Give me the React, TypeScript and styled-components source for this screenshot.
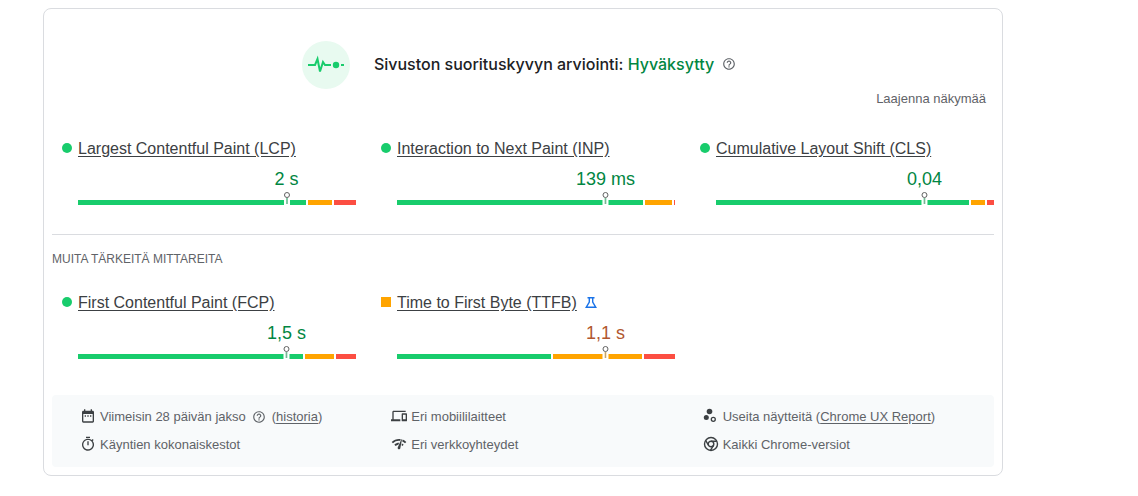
import React from "react";
import styled, { createGlobalStyle } from "styled-components";
import { MdDateRange, MdDevices, MdHelpOutline, MdNetworkCheck, MdOutlineTimer } from "react-icons/md";

type Rating = "good" | "average" | "poor";

const barColors: Record<Rating, string> = { good: "#18cc6c", average: "#ffa400", poor: "#fc4e42" };
const valueColors: Record<Rating, string> = { good: "#018642", average: "#b1572f", poor: "#eb0f00" };

interface MetricData {
  name: string;
  value: string;
  rating: Rating;
  shares: [number, number, number];
  experimental?: boolean;
}

const coreMetrics: MetricData[] = [
  { name: "Largest Contentful Paint (LCP)", value: "2 s", rating: "good", shares: [227, 24, 22] },
  { name: "Interaction to Next Paint (INP)", value: "139 ms", rating: "good", shares: [245, 27, 1] },
  { name: "Cumulative Layout Shift (CLS)", value: "0,04", rating: "good", shares: [253, 14, 7] },
];

const otherMetrics: MetricData[] = [
  { name: "First Contentful Paint (FCP)", value: "1,5 s", rating: "good", shares: [224, 29, 20] },
  { name: "Time to First Byte (TTFB)", value: "1,1 s", rating: "average", shares: [153, 89, 31], experimental: true },
];

const GlobalStyle = createGlobalStyle`
  *, *::before, *::after { box-sizing: border-box; }
  body {
    margin: 0;
    background: #fff;
    color: #5f6368;
    font-family: "Liberation Sans", Arial, sans-serif;
  }
`;

const Page = styled.main`
  padding: 8px 43px 20px;
`;

const Card = styled.section`
  max-width: 960px;
  padding: 32px 8px 8px;
  border: 1px solid #dadce0;
  border-radius: 8px;
`;

const Header = styled.header`
  display: flex;
  align-items: center;
  justify-content: center;
  gap: 24px;
`;

const Badge = styled.span`
  display: flex;
  flex: none;
  width: 48px;
  height: 48px;
  border-radius: 50%;
  background: #e8faf0;
`;

const Title = styled.h1`
  display: flex;
  align-items: center;
  margin: 0;
  padding-bottom: 2px;
  color: #202124;
  font: 500 16px/24px "Google Sans", Inter, sans-serif;
`;

const Verdict = styled.span`
  color: #018642;
`;

const HelpButton = styled.button<{ $space: number }>`
  display: inline-flex;
  flex: none;
  margin: 0 ${(p) => p.$space}px;
  padding: 0;
  border: 0;
  background: none;
  color: #5f6368;
  font-size: 14px;
  cursor: pointer;
`;

const Toolbar = styled.div`
  display: flex;
  justify-content: flex-end;
  padding-right: 8px;
`;

const ExpandButton = styled.button`
  padding: 0;
  border: 0;
  background: none;
  color: #5f6368;
  font: 13px/20px "Liberation Sans", Arial, sans-serif;
  cursor: pointer;
`;

const MetricGrid = styled.div<{ $top: number }>`
  display: grid;
  grid-template-columns: repeat(3, minmax(0, 1fr));
  column-gap: 25px;
  margin-top: ${(p) => p.$top}px;
  padding-left: 10px;
`;

const MetricBox = styled.article`
  display: grid;
  grid-template-columns: 10px minmax(0, 1fr);
  column-gap: 6px;
  align-items: center;
`;

const Marker = styled.span<{ $rating: Rating }>`
  width: 10px;
  height: 10px;
  border-radius: ${(p) => (p.$rating === "good" ? "50%" : "0")};
  background: ${(p) => barColors[p.$rating]};
`;

const MetricName = styled.h2`
  display: flex;
  align-items: center;
  gap: 8px;
  margin: 0;
  padding-top: 2px;
  font-size: 16px;
  font-weight: 400;
  line-height: 24px;
`;

const TextLink = styled.a`
  color: inherit;
  text-decoration: underline;
  text-underline-offset: 2px;
`;

const MetricLink = styled(TextLink)`
  color: #3c4043;
`;

const Chart = styled.div`
  position: relative;
  grid-column: 2;
  padding-top: 39px;
`;

const Pin = styled.div<{ $rating: Rating }>`
  position: absolute;
  top: 6px;
  left: 75%;
  display: flex;
  flex-direction: column;
  align-items: center;
  transform: translateX(-50%);
  color: ${(p) => valueColors[p.$rating]};
  font-size: 18px;
  line-height: 24px;
  white-space: nowrap;
`;

const Bar = styled.div`
  display: flex;
  gap: 2px;
  height: 5px;
`;

const Segment = styled.span<{ $rating: Rating }>`
  flex-basis: 0;
  background: ${(p) => barColors[p.$rating]};
`;

const Divider = styled.hr`
  height: 1px;
  margin: 29px 0 16px;
  border: 0;
  background: #dadce0;
`;

const SectionLabel = styled.h2`
  margin: 0;
  font-size: 12px;
  font-weight: 400;
  line-height: 16px;
  text-transform: uppercase;
`;

const Facts = styled.ul`
  display: grid;
  grid-template-columns: repeat(3, minmax(0, 1fr));
  gap: 10px 28px;
  margin: 36px 0 0;
  padding: 13px 8px 13px 28px;
  border-radius: 4px;
  background: #f8fafb;
  list-style: none;
`;

const Fact = styled.li`
  display: flex;
  align-items: center;
  gap: 4px;
  font-size: 13px;
  line-height: 18px;
  white-space: nowrap;

  & > svg {
    flex: none;
    width: 16px;
    height: 16px;
    margin-bottom: 2px;
    color: #3c4043;
  }
`;

function PulseIcon() {
  return (
    <svg width="48" height="48" viewBox="0 0 48 48" fill="none" aria-hidden="true">
      <path d="M6 24h7l2.500-6L18 30.500l3-9.500 2 3h6" stroke="#18cc6c" strokeWidth="2" />
      <circle cx="34" cy="24" r="3.200" fill="#18cc6c" />
      <path d="M39 24h3" stroke="#18cc6c" strokeWidth="2" />
    </svg>
  );
}

function FlaskIcon() {
  return (
    <svg width="12" height="14" viewBox="0 0 12 14" fill="none" stroke="#1a73e8" strokeWidth="1.400" role="img" aria-label="Kokeellinen">
      <path d="M2.500 1.700h7M4.300 1.700v4.300L1.200 11.300h9.600L7.700 6V1.700" />
    </svg>
  );
}

function SamplesIcon() {
  return (
    <svg viewBox="0 0 16 16" aria-hidden="true">
      <circle cx="6.500" cy="3.500" r="2.800" fill="currentColor" />
      <circle cx="3.300" cy="9.500" r="2.500" fill="currentColor" />
      <circle cx="10.300" cy="11.300" r="2" fill="none" stroke="currentColor" strokeWidth="1.300" />
    </svg>
  );
}

function ChromeIcon() {
  return (
    <svg viewBox="0 0 16 16" fill="none" stroke="currentColor" strokeWidth="1.400" aria-hidden="true">
      <circle cx="8" cy="8" r="6.500" />
      <circle cx="8" cy="8" r="2.800" />
      <path d="M8 5.200h5.800M5.600 9.400L2.600 4.400M10.400 9.400L7.500 14.400" />
    </svg>
  );
}

function Metric({ metric }: { metric: MetricData }) {
  const ratings: Rating[] = ["good", "average", "poor"];
  return (
    <MetricBox>
      <Marker $rating={metric.rating} />
      <MetricName>
        <MetricLink href="#">{metric.name}</MetricLink>
        {metric.experimental && <FlaskIcon />}
      </MetricName>
      <Chart>
        <Bar>
          {ratings.map((rating, i) => (
            <Segment key={rating} $rating={rating} style={{ flexGrow: metric.shares[i] }} />
          ))}
        </Bar>
        <Pin $rating={metric.rating}>
          {metric.value}
          <svg width="8" height="14" viewBox="0 0 8 14" aria-hidden="true">
            <rect x="1" y="9" width="6" height="5" fill="#fff" />
            <path d="M4 7v6" stroke={barColors[metric.rating]} strokeOpacity="0.5" strokeWidth="2" />
            <path d="M4 7v6" stroke="#757575" strokeOpacity="0.5" strokeWidth="1" />
            <circle cx="4" cy="4" r="2.500" fill="#fff" stroke="#616161" />
          </svg>
        </Pin>
      </Chart>
    </MetricBox>
  );
}

export default function App() {
  return (
    <>
      <GlobalStyle />
      <Page>
        <Card>
          <Header>
            <Badge><PulseIcon /></Badge>
            <Title>
              <span>Sivuston suorituskyvyn arviointi: <Verdict>Hyväksytty</Verdict></span>
              <HelpButton type="button" aria-label="Ohje" $space={8}><MdHelpOutline /></HelpButton>
            </Title>
          </Header>
          <Toolbar>
            <ExpandButton type="button">Laajenna näkymää</ExpandButton>
          </Toolbar>
          <MetricGrid $top={26}>
            {coreMetrics.map((m) => <Metric key={m.name} metric={m} />)}
          </MetricGrid>
          <Divider />
          <SectionLabel>Muita tärkeitä mittareita</SectionLabel>
          <MetricGrid $top={22}>
            {otherMetrics.map((m) => <Metric key={m.name} metric={m} />)}
          </MetricGrid>
          <Facts>
            <Fact>
              <MdDateRange />
              <span>Viimeisin 28 päivän jakso</span>
              <HelpButton type="button" aria-label="Ohje" $space={2}><MdHelpOutline /></HelpButton>
              <span>(<TextLink href="#">historia</TextLink>)</span>
            </Fact>
            <Fact><MdDevices /><span>Eri mobiililaitteet</span></Fact>
            <Fact><SamplesIcon /><span>Useita näytteitä (<TextLink href="#">Chrome UX Report</TextLink>)</span></Fact>
            <Fact><MdOutlineTimer /><span>Käyntien kokonaiskestot</span></Fact>
            <Fact><MdNetworkCheck /><span>Eri verkkoyhteydet</span></Fact>
            <Fact><ChromeIcon /><span>Kaikki Chrome-versiot</span></Fact>
          </Facts>
        </Card>
      </Page>
    </>
  );
}
